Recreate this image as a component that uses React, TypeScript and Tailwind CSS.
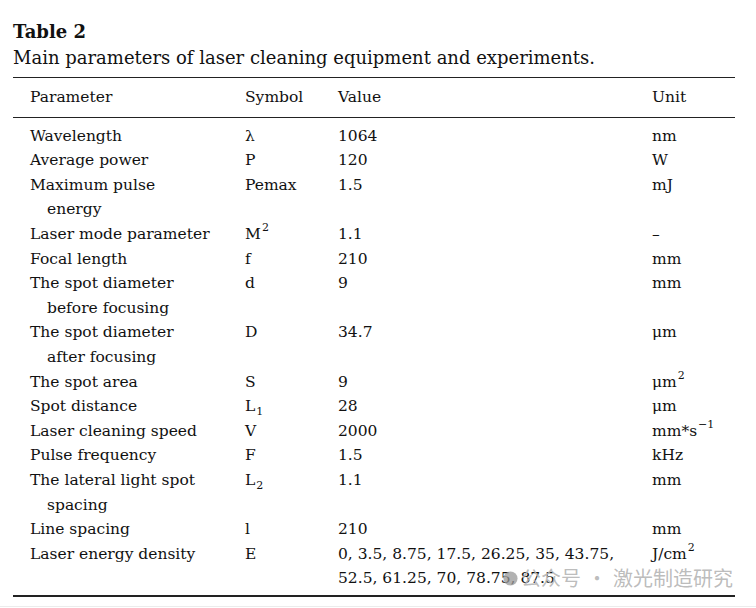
import type { ReactNode } from "react";

interface Row {
  param: string;
  cont?: string;
  symbol: ReactNode;
  value: ReactNode;
  unit: ReactNode;
}

const Sup = ({ children }: { children: ReactNode }) => (
  <span className="inline-block align-top text-[11px] leading-[14px] relative -top-[1px] ml-[1px]">{children}</span>
);

const Sub = ({ children }: { children: ReactNode }) => (
  <span className="inline-block align-baseline text-[11px] leading-[11px] relative top-[4px] ml-[1px]">{children}</span>
);

const rows: Row[] = [
  { param: "Wavelength", symbol: "λ", value: "1064", unit: "nm" },
  { param: "Average power", symbol: "P", value: "120", unit: "W" },
  { param: "Maximum pulse", cont: "energy", symbol: "Pemax", value: "1.5", unit: "mJ" },
  { param: "Laser mode parameter", symbol: <>M<Sup>2</Sup></>, value: "1.1", unit: "–" },
  { param: "Focal length", symbol: "f", value: "210", unit: "mm" },
  { param: "The spot diameter", cont: "before focusing", symbol: "d", value: "9", unit: "mm" },
  { param: "The spot diameter", cont: "after focusing", symbol: "D", value: "34.7", unit: "μm" },
  { param: "The spot area", symbol: "S", value: "9", unit: <>μm<Sup>2</Sup></> },
  { param: "Spot distance", symbol: <>L<Sub>1</Sub></>, value: "28", unit: "μm" },
  { param: "Laser cleaning speed", symbol: "V", value: "2000", unit: <>mm*s<Sup>−1</Sup></> },
  { param: "Pulse frequency", symbol: "F", value: "1.5", unit: "kHz" },
  { param: "The lateral light spot", cont: "spacing", symbol: <>L<Sub>2</Sub></>, value: "1.1", unit: "mm" },
  { param: "Line spacing", symbol: "l", value: "210", unit: "mm" },
  {
    param: "Laser energy density",
    symbol: "E",
    value: (
      <>
        0, 3.5, 8.75, 17.5, 26.25, 35, 43.75,
        <br />
        52.5, 61.25, 70, 78.75, 87.5
      </>
    ),
    unit: <>J/cm<Sup>2</Sup></>,
  },
];

const cols = "grid grid-cols-[215px_93px_314px_1fr] pl-[17px]";

export default function App() {
  return (
    <div className="w-[756px] h-[608px] bg-white text-[#111] font-['DejaVu_Serif',serif] relative overflow-hidden">
      <div className="pl-[13px] pr-[21px] pt-[19px]">
        <h2 className="text-[18px] font-bold leading-[26px]">Table 2</h2>
        <p className="text-[18px] leading-[26px]">
          Main parameters of laser cleaning equipment and experiments.
        </p>

        <div className="mt-[6px] border-t-[1.5px] border-b-2 border-[#222]">
          <div className={`${cols} border-b border-[#222] py-[7px] text-[15.5px] leading-[24.6px]`}>
            <div>Parameter</div>
            <div>Symbol</div>
            <div>Value</div>
            <div>Unit</div>
          </div>

          <div className="pt-[6px] pb-[4px] text-[15.5px] leading-[24.6px]">
            {rows.map((r, i) => (
              <div key={i} className={cols}>
                <div>
                  <div>{r.param}</div>
                  {r.cont && <div className="pl-[17px]">{r.cont}</div>}
                </div>
                <div>{r.symbol}</div>
                <div>{r.value}</div>
                <div>{r.unit}</div>
              </div>
            ))}
          </div>
        </div>
      </div>

      <div className="absolute left-0 right-0 top-[606px] h-px bg-[#ececec]" />

      {/* watermark */}
      <div className="absolute left-[503px] top-[565px] flex items-center text-[#b4b4b4]/90 font-['Noto_Sans_CJK_SC',sans-serif] text-[20px] leading-[26px] pointer-events-none">
        <svg width="15" height="15" viewBox="0 0 16 16" className="opacity-75 mr-[3px]">
          <circle cx="8" cy="8" r="7.5" fill="#999" />
        </svg>
        <span>公众号</span>
        <span className="mx-[6px]">·</span>
        <span>激光制造研究</span>
      </div>
    </div>
  );
}
